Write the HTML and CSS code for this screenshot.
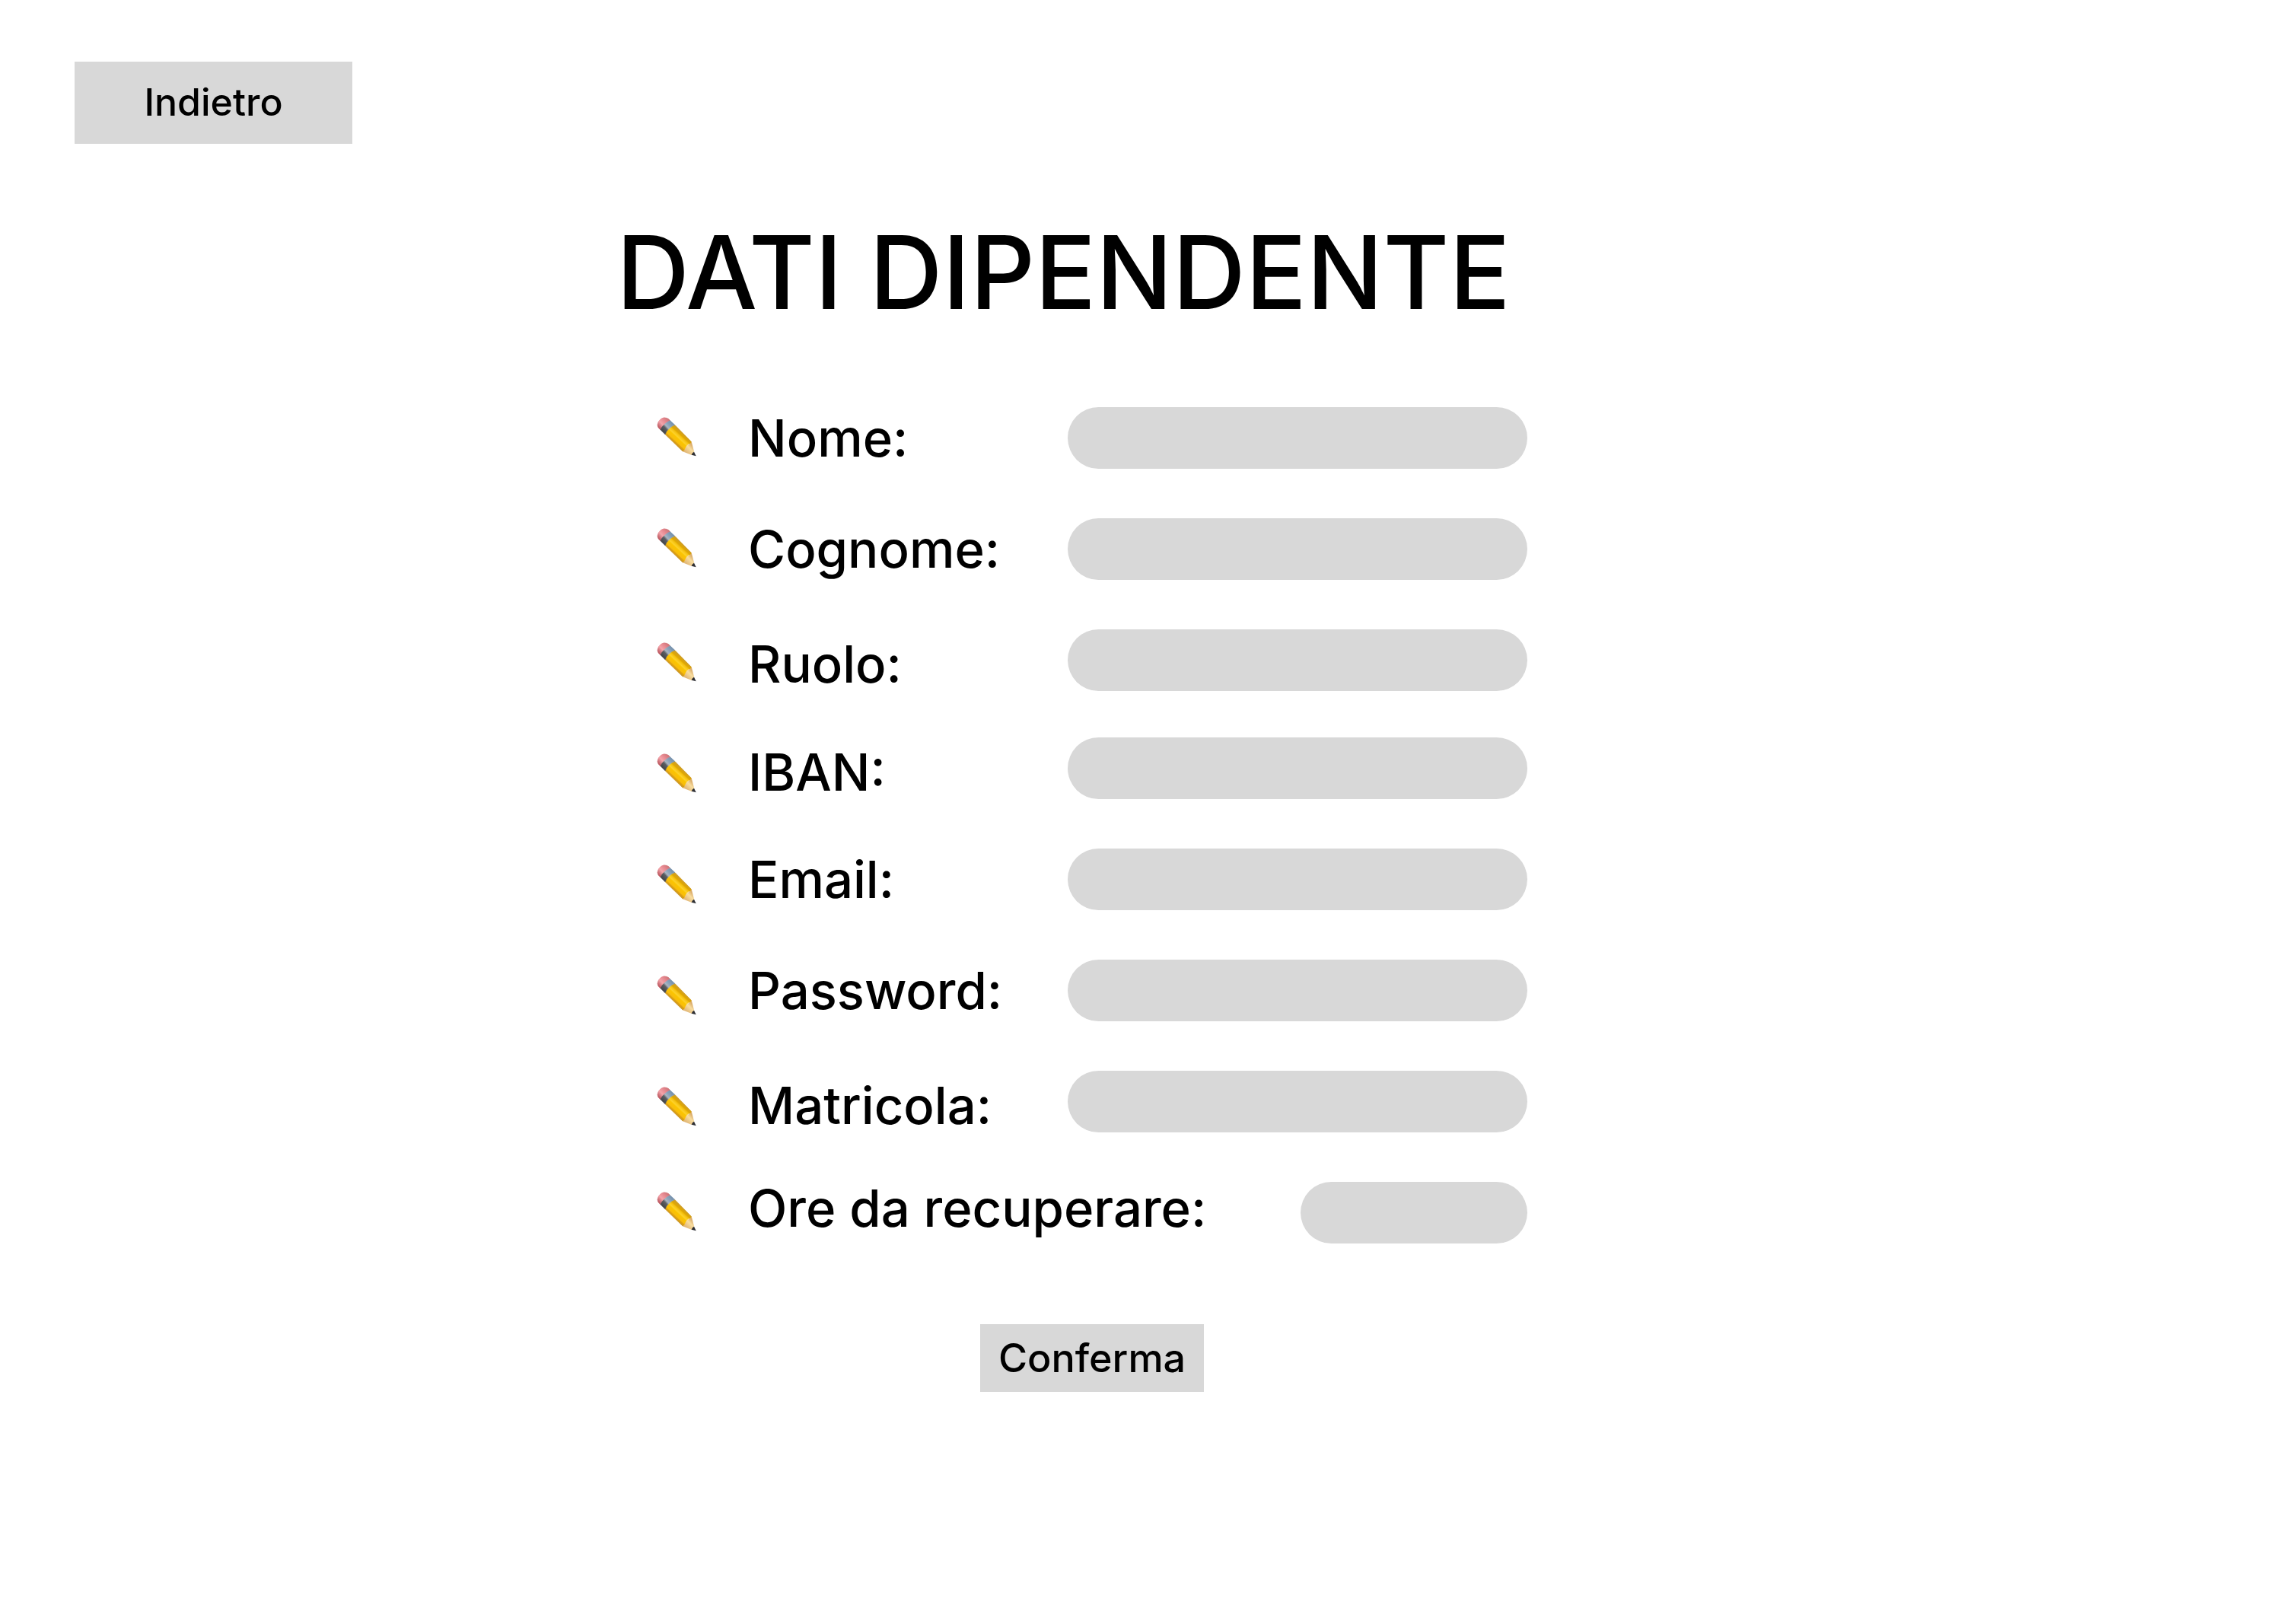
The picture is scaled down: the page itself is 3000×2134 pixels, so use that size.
FILE: index.html
```html
<!DOCTYPE html>
<html lang="it">
<head>
<meta charset="utf-8">
<meta name="viewport" content="width=device-width, initial-scale=1">
<title>Dati dipendente</title>
<link rel="stylesheet" href="styles.css">
</head>
<body>
<svg class="sprite" aria-hidden="true">
  <defs>
    <linearGradient id="body" gradientUnits="userSpaceOnUse" x1="168" y1="117" x2="132" y2="156">
      <stop offset="0" stop-color="#cf9d24"/>
      <stop offset=".2" stop-color="#e0a800"/>
      <stop offset=".3" stop-color="#f5c211"/>
      <stop offset=".45" stop-color="#fdd22c"/>
      <stop offset=".55" stop-color="#fbc400"/>
      <stop offset=".78" stop-color="#f8bd0c"/>
      <stop offset=".86" stop-color="#dda010"/>
      <stop offset="1" stop-color="#c8952a"/>
    </linearGradient>
    <linearGradient id="ferrule" gradientUnits="userSpaceOnUse" x1="128" y1="76" x2="88" y2="112">
      <stop offset="0" stop-color="#7490ac"/>
      <stop offset=".3" stop-color="#8aa3bb"/>
      <stop offset=".5" stop-color="#a9b4c0"/>
      <stop offset=".65" stop-color="#5c5f64"/>
      <stop offset="1" stop-color="#434446"/>
    </linearGradient>
    <linearGradient id="eraser" gradientUnits="userSpaceOnUse" x1="112" y1="62" x2="74" y2="98">
      <stop offset="0" stop-color="#cf7478"/>
      <stop offset=".35" stop-color="#ea8d95"/>
      <stop offset=".6" stop-color="#f3a4aa"/>
      <stop offset="1" stop-color="#b8525a"/>
    </linearGradient>
    <linearGradient id="wood" gradientUnits="userSpaceOnUse" x1="206" y1="166" x2="180" y2="192">
      <stop offset="0" stop-color="#dcae6c"/>
      <stop offset=".4" stop-color="#f8dda0"/>
      <stop offset="1" stop-color="#e2b878"/>
    </linearGradient>
    <symbol id="pencil" viewBox="66 15 156 219">
      <path fill="url(#eraser)" stroke="url(#eraser)" stroke-width="2" d="M81 104Q69 96 69 85Q71 69 83 61Q94 54 105 58Q114 61 119 68Q110 72 99 81Q88 90 81 104Z"/>
      <path fill="url(#body)" stroke="url(#body)" stroke-width="2" d="M137 85L202 151Q204 158 196 160Q186 160 183 172Q180 190 168 189L99 122Q103 110 115 99Q126 89 137 85Z"/>
      <path fill="url(#ferrule)" stroke="url(#ferrule)" stroke-width="2" d="M119 68L137 85Q126 89 115 99Q103 110 99 122L81 104Q84 94 96 83Q107 73 119 68Z"/>
      <path fill="url(#wood)" d="M203 151L214 193L204 204L168 190Q176 188 178 178Q180 168 189 164Q201 160 203 151Z"/>
      <path fill="#2d2e33" d="M213 191Q206 194 203 203L221 208Z"/>
    </symbol>
  </defs>
</svg>

<header class="topbar">
  <button class="button button-back" type="button">Indietro</button>
</header>

<main class="content">
  <h1 class="title">DATI DIPENDENTE</h1>
  <form class="form">
    <div class="group">
      <div class="row">
        <svg class="pencil at-start" aria-hidden="true"><use href="#pencil"/></svg>
        <label class="label at-center" for="nome">Nome:</label>
        <input class="field" id="nome" type="text">
      </div>
      <div class="row">
        <svg class="pencil at-start" aria-hidden="true"><use href="#pencil"/></svg>
        <label class="label at-center" for="cognome">Cognome:</label>
        <input class="field" id="cognome" type="text">
      </div>
      <div class="row">
        <svg class="pencil at-center" aria-hidden="true"><use href="#pencil"/></svg>
        <label class="label at-end" for="ruolo">Ruolo:</label>
        <input class="field" id="ruolo" type="text">
      </div>
    </div>
    <div class="group">
      <div class="row">
        <svg class="pencil at-end" aria-hidden="true"><use href="#pencil"/></svg>
        <label class="label at-end" for="iban">IBAN:</label>
        <input class="field" id="iban" type="text">
      </div>
      <div class="row">
        <svg class="pencil at-end" aria-hidden="true"><use href="#pencil"/></svg>
        <label class="label at-center" for="email">Email:</label>
        <input class="field" id="email" type="email">
      </div>
      <div class="row">
        <svg class="pencil at-end" aria-hidden="true"><use href="#pencil"/></svg>
        <label class="label at-center" for="password">Password:</label>
        <input class="field" id="password" type="password">
      </div>
      <div class="row">
        <svg class="pencil at-end" aria-hidden="true"><use href="#pencil"/></svg>
        <label class="label at-end" for="matricola">Matricola:</label>
        <input class="field" id="matricola" type="text">
      </div>
      <div class="row">
        <svg class="pencil at-start" aria-hidden="true"><use href="#pencil"/></svg>
        <label class="label at-start" for="ore">Ore da recuperare:</label>
        <input class="field field-short" id="ore" type="text">
      </div>
    </div>
    <button class="button button-confirm" type="submit">Conferma</button>
  </form>
</main>
</body>
</html>
```

FILE: styles.css
```css
* {
  box-sizing: border-box;
}

body {
  margin: 0;
  background: #fff;
  color: #000;
  font-family: Inter, sans-serif;
  font-weight: 500;
}

.sprite {
  display: block;
  width: 0;
  height: 0;
}

.topbar {
  padding: 81px 98px 0;
}

.button {
  display: block;
  border: 0;
  border-radius: 0;
  background: #d8d8d8;
  color: inherit;
  font: inherit;
  white-space: nowrap;
  cursor: pointer;
}

.button-back {
  min-width: 365px;
  height: 108px;
  padding: 0 6px 2px;
  font-size: 50px;
}

.button-confirm {
  align-self: center;
  min-width: 294px;
  height: 89px;
  margin-top: 45px;
  font-size: 52px;
}

.content {
  max-width: 2007px;
  padding-left: 27%;
}

.title {
  margin: 88px 0 96px;
  font-size: 133px;
  font-weight: 500;
  line-height: 162px;
  white-space: nowrap;
}

.form {
  display: flex;
  flex-direction: column;
  gap: 61px;
  padding-left: 53px;
}

.group {
  display: flex;
  flex-direction: column;
  gap: 65px;
}

.row {
  display: flex;
  min-height: 81px;
}

.pencil {
  flex: none;
  width: 52px;
  height: 73px;
  margin-right: 68px;
}

.label {
  font-size: 67px;
  line-height: 70px;
  white-space: nowrap;
}

.at-start {
  align-self: flex-start;
}

.at-center {
  align-self: center;
}

.at-end {
  align-self: flex-end;
}

.field {
  width: 604px;
  height: 81px;
  margin: 0 0 0 auto;
  padding: 0 40px;
  border: 0;
  border-radius: 41px;
  background: #d8d8d8;
  color: inherit;
  font: inherit;
  font-size: 50px;
}

.field-short {
  width: 298px;
}
```
